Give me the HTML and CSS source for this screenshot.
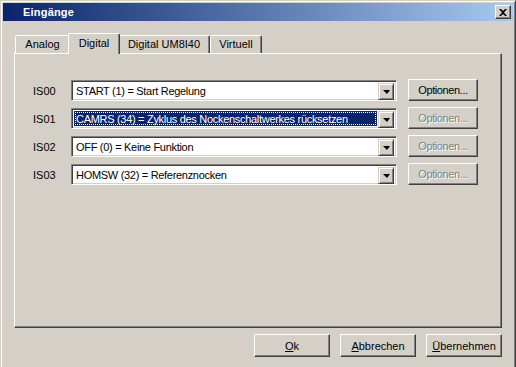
FILE: index.html
```html
<!DOCTYPE html>
<html>
<head>
<meta charset="utf-8">
<link rel="stylesheet" href="styles.css">
</head>
<body>
<div class="window">
  <div class="caption">
    <span class="caption-title">Eingänge</span>
    <button class="close-btn" aria-label="Schließen">
      <svg width="8" height="7" viewBox="0 0 8 7"><path d="M0 0h2l2 2 2-2h2L5 3.5 8 7H6L4 5 2 7H0l3-3.5z" fill="#000"/></svg>
    </button>
  </div>
  <div class="client">
    <div class="tabs">
      <div class="tab tab-analog">Analog</div>
      <div class="tab tab-digital active">Digital</div>
      <div class="tab tab-um">Digital UM8I40</div>
      <div class="tab tab-virt">Virtuell</div>
    </div>
    <div class="panel">
      <div class="rows">
        <div class="label">IS00</div>
        <div class="combo"><div class="combo-text">START (1) = Start Regelung</div><div class="drop"><span class="arrow"></span></div></div>
        <button class="btn opt">Optionen...</button>

        <div class="label">IS01</div>
        <div class="combo"><div class="combo-text selected"><span class="focus">CAMRS (34) = Zyklus des Nockenschaltwerkes rücksetzen</span></div><div class="drop"><span class="arrow"></span></div></div>
        <button class="btn opt disabled">Optionen...</button>

        <div class="label">IS02</div>
        <div class="combo"><div class="combo-text">OFF (0) = Keine Funktion</div><div class="drop"><span class="arrow"></span></div></div>
        <button class="btn opt disabled">Optionen...</button>

        <div class="label">IS03</div>
        <div class="combo"><div class="combo-text">HOMSW (32) = Referenznocken</div><div class="drop"><span class="arrow"></span></div></div>
        <button class="btn opt disabled">Optionen...</button>
      </div>
    </div>
    <div class="footer">
      <button class="btn big"><u>O</u>k</button>
      <button class="btn big"><u>A</u>bbrechen</button>
      <button class="btn big"><u>Ü</u>bernehmen</button>
    </div>
  </div>
</div>
</body>
</html>
```

FILE: styles.css
```css
* { box-sizing: border-box; }
html, body {
  margin: 0;
  padding: 0;
  background: #d4d0c8;
  overflow: hidden;
}
body {
  font-family: "Liberation Sans", Arial, sans-serif;
  font-size: 11px;
  color: #000;
}
.window {
  width: 516px;
  height: 372px;
  background: #d4d0c8;
  border-style: solid;
  border-width: 1px;
  border-color: #d4d0c8 #404040 #404040 #d4d0c8;
  box-shadow: inset 1px 1px #ffffff, inset -1px -1px #808080;
  padding: 2px;
}
.caption {
  height: 18px;
  background: linear-gradient(to right, #0a246a, #a6caf0);
  display: flex;
  align-items: center;
  justify-content: space-between;
  padding: 0 2px 0 20px;
}
.caption-title {
  color: #fff;
  font-weight: bold;
  font-size: 11px;
  letter-spacing: 0.2px;
}
.close-btn {
  width: 16px;
  height: 14px;
  padding: 0;
  margin: 0;
  background: #d4d0c8;
  border-style: solid;
  border-width: 1px;
  border-color: #fff #404040 #404040 #fff;
  box-shadow: inset -1px -1px #808080;
  display: flex;
  align-items: center;
  justify-content: center;
}
.client {
  padding: 12px 10px 0 11px;
}
.tabs {
  display: flex;
  align-items: flex-end;
  height: 20px;
  padding-left: 1px;
  position: relative;
  z-index: 2;
}
.tab {
  height: 18px;
  background: #d4d0c8;
  border-style: solid;
  border-width: 1px 1px 0 1px;
  border-color: #fff #404040 transparent #fff;
  border-radius: 2px 2px 0 0;
  box-shadow: inset -1px 0 #808080;
  display: flex;
  align-items: center;
  justify-content: center;
  padding-bottom: 1px;
}
.tab-analog { width: 55px; }
.tab-digital { width: 48px; }
.tab-um { width: 92px; }
.tab-virt { width: 52px; }
.tab.active {
  height: 21px;
  margin: 0 -2px -1px -2px;
  width: 52px;
  position: relative;
  z-index: 3;
  padding-bottom: 3px;
}
.panel {
  width: 488px;
  height: 275px;
  border-style: solid;
  border-width: 1px;
  border-color: #fff #404040 #404040 #fff;
  box-shadow: inset -1px -1px #808080;
  padding: 26px 0 0 18px;
}
.rows {
  display: grid;
  grid-template-columns: 38px 326px 70px;
  column-gap: 0;
  row-gap: 7px;
  grid-auto-rows: 21px;
  align-items: center;
}
.rows .btn { margin-left: 11px; }
.label {
  padding-top: 1px;
}
.combo {
  height: 21px;
  background: #fff;
  border-style: solid;
  border-width: 1px;
  border-color: #808080 #fff #fff #808080;
  box-shadow: inset 1px 1px #404040, inset -1px -1px #d4d0c8;
  padding: 2px;
  display: flex;
}
.combo-text {
  flex: 1;
  display: flex;
  align-items: center;
  padding-left: 2px;
  white-space: nowrap;
  overflow: hidden;
  letter-spacing: -0.3px;
}
.combo-text.selected {
  background: #0a246a;
  color: #fff;
  padding: 1px;
  margin-right: 1px;
}
.focus {
  flex: 1;
  height: 100%;
  display: flex;
  align-items: center;
  padding-left: 1px;
  outline: 1px dotted #fff;
  outline-offset: -1px;
}
.drop {
  width: 16px;
  height: 17px;
  background: #d4d0c8;
  border-style: solid;
  border-width: 1px;
  border-color: #d4d0c8 #404040 #404040 #d4d0c8;
  box-shadow: inset 1px 1px #fff, inset -1px -1px #808080;
  display: flex;
  align-items: center;
  justify-content: center;
}
.arrow {
  width: 0;
  height: 0;
  border-left: 4px solid transparent;
  border-right: 3px solid transparent;
  border-top: 4px solid #000;
  margin-top: 1px;
}
.btn {
  font-family: "Liberation Sans", Arial, sans-serif;
  font-size: 11px;
  color: #000;
  background: #d4d0c8;
  border-style: solid;
  border-width: 1px;
  border-color: #fff #404040 #404040 #fff;
  box-shadow: inset -1px -1px #808080;
  padding: 0;
  margin: 0;
  display: flex;
  align-items: center;
  justify-content: center;
}
.btn.opt {
  width: 70px;
  height: 22px;
  margin-top: -1px;
  padding-bottom: 1px;
  letter-spacing: -0.4px;
}
.btn.disabled {
  color: #808080;
  text-shadow: 1px 1px #fff;
}
.footer {
  display: flex;
  justify-content: flex-end;
  gap: 10px;
  padding-top: 6px;
  padding-right: 1px;
}
.btn.big {
  width: 76px;
  height: 23px;
}
.btn u { text-decoration: underline; text-underline-offset: 1px; }
```
